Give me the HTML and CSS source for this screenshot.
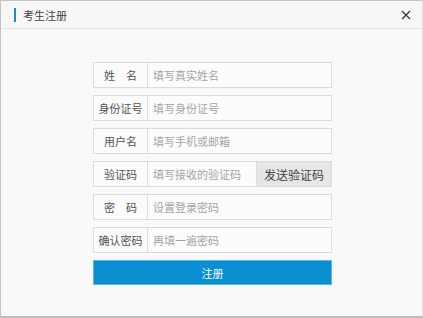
FILE: index.html
```html
<!DOCTYPE html>
<html lang="zh-CN">
<head>
    <meta charset="UTF-8">
    <title>考生注册</title>
    <link rel="stylesheet" href="styles.css">
</head>
<body>
    <div class="dialog">
        <div class="dialog-head">
            <span class="dialog-title">考生注册</span>
            <span class="dialog-close">
                <svg width="10" height="10" viewBox="0 0 10 10"><path d="M1 1L9 9M9 1L1 9" stroke="#333" stroke-width="1.2"/></svg>
            </span>
        </div>
        <form class="reg-form">
            <div class="row">
                <label class="row-label">姓&emsp;名</label>
                <input class="row-input" type="text" placeholder="填写真实姓名">
            </div>
            <div class="row">
                <label class="row-label">身份证号</label>
                <input class="row-input" type="text" placeholder="填写身份证号">
            </div>
            <div class="row">
                <label class="row-label">用户名</label>
                <input class="row-input" type="text" placeholder="填写手机或邮箱">
            </div>
            <div class="row">
                <label class="row-label">验证码</label>
                <input class="row-input" type="text" placeholder="填写接收的验证码">
                <button class="send-code" type="button">发送验证码</button>
            </div>
            <div class="row">
                <label class="row-label">密&emsp;码</label>
                <input class="row-input" type="password" placeholder="设置登录密码">
            </div>
            <div class="row">
                <label class="row-label">确认密码</label>
                <input class="row-input" type="password" placeholder="再填一遍密码">
            </div>
            <button class="submit-btn" type="submit">注册</button>
        </form>
    </div>
</body>
</html>
```

FILE: styles.css
```css
* {
    box-sizing: border-box;
}

body {
    margin: 0;
    font-family: "Noto Sans CJK SC", "Noto Sans", sans-serif;
    font-size: 11px;
    color: #444;
}

.dialog {
    width: 423px;
    height: 318px;
    background: #f9f9f9;
    border: 1px solid #c4c4c4;
    border-right-color: #e0e0e0;
    border-bottom: 2px solid #bdbdbd;
}

.dialog-head {
    height: 28px;
    display: flex;
    align-items: center;
    justify-content: space-between;
    padding: 0 11px 0 13px;
    background: #f7f7f7;
    border-bottom: 1px solid #e6e6e6;
}

.dialog-title {
    border-left: 2px solid #1a8ad6;
    padding-left: 7px;
    line-height: 14px;
    color: #444;
}

.dialog-close {
    display: flex;
}

.reg-form {
    display: flex;
    flex-direction: column;
    gap: 7px;
    width: 239px;
    margin: 33px 0 0 92px;
}

.row {
    display: flex;
    height: 26px;
    border: 1px solid #dcdcdc;
    background: #fbfbfb;
}

.row-label {
    width: 54px;
    flex: none;
    display: flex;
    align-items: center;
    justify-content: center;
    border-right: 1px solid #dcdcdc;
    color: #555;
}

.row-input {
    flex: 1;
    min-width: 0;
    border: none;
    background: #fcfcfc;
    padding: 0 5px;
    font: inherit;
    color: #333;
    outline: none;
}

.row-input::placeholder {
    color: #a5a5a5;
}

.send-code {
    width: 75px;
    flex: none;
    border: none;
    border-left: 1px solid #dcdcdc;
    background: #e6e6e6;
    font: inherit;
    font-size: 12px;
    color: #444;
    padding: 0;
}

.submit-btn {
    height: 25px;
    border: 1px solid #5fb4e6;
    background: #0a8fd3;
    color: #fff;
    font: inherit;
}
```
